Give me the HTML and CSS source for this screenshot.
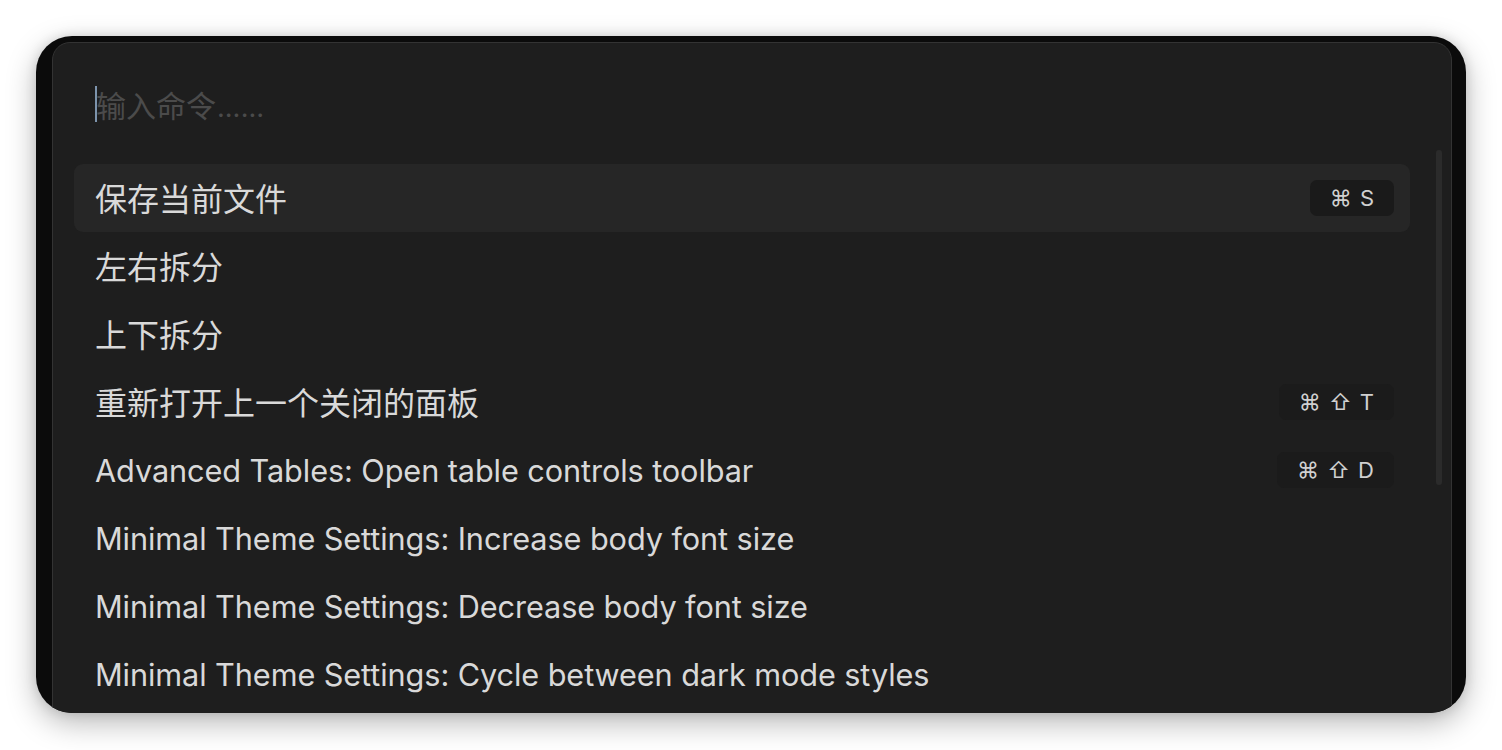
FILE: index.html
```html
<!DOCTYPE html>
<html lang="zh">
<head>
<meta charset="utf-8">
<title>Command palette</title>
<link rel="stylesheet" href="styles.css">
</head>
<body>
<div class="frame">
  <div class="panel">
    <div class="prompt">
      <span class="caret"></span><span class="placeholder">输入命令<span class="dots">……</span></span>
    </div>
    <div class="list">
      <div class="row selected"><span class="label cjk">保存当前文件</span><span class="kbd">⌘ S</span></div>
      <div class="row"><span class="label cjk">左右拆分</span></div>
      <div class="row"><span class="label cjk">上下拆分</span></div>
      <div class="row"><span class="label cjk">重新打开上一个关闭的面板</span><span class="kbd dim">⌘ ⇧ T</span></div>
      <div class="row"><span class="label">Advanced Tables: Open table controls toolbar</span><span class="kbd dim">⌘ ⇧ D</span></div>
      <div class="row"><span class="label">Minimal Theme Settings: Increase body font size</span></div>
      <div class="row"><span class="label">Minimal Theme Settings: Decrease body font size</span></div>
      <div class="row"><span class="label">Minimal Theme Settings: Cycle between dark mode styles</span></div>
    </div>
    <div class="scrollbar"></div>
  </div>
</div>
</body>
</html>
```

FILE: styles.css
```css
html, body {
  margin: 0;
  padding: 0;
  background: #ffffff;
}
body {
  width: 1502px;
  height: 750px;
  overflow: hidden;
  font-family: Inter, "Noto Sans CJK SC", sans-serif;
}
.frame {
  margin: 36px 0 0 36px;
  width: 1430px;
  height: 677px;
  box-sizing: border-box;
  padding: 6px 14px 0 16px;
  background: #0b0b0b;
  border-radius: 36px;
  overflow: hidden;
  box-shadow: 0 10px 30px rgba(0,0,0,0.28), 0 0 12px rgba(0,0,0,0.12);
}
.panel {
  position: relative;
  height: 720px;
  box-sizing: border-box;
  background: #1e1e1e;
  border: 1px solid #333333;
  border-radius: 18px;
  padding: 0 41px 0 21px;
}
.prompt {
  display: flex;
  align-items: center;
  height: 36px;
  margin: 43px 0 42px 21px;
}
.caret {
  width: 2px;
  height: 36px;
  background: #7d94ad;
}
.placeholder {
  font-family: "Noto Sans CJK SC", sans-serif;
  font-size: 30px;
  color: #4b4b4b;
  margin-left: -1px;
}
.dots {
  font-family: Inter, sans-serif;
  font-size: 27px;
  letter-spacing: 0.5px;
  margin-left: 1px;
}
.list {
  display: flex;
  flex-direction: column;
}
.row {
  display: flex;
  align-items: center;
  justify-content: space-between;
  height: 68px;
  padding: 0 16px 0 21px;
  border-radius: 9px;
  color: #d9d9d9;
}
.row.selected {
  background: #262626;
}
.label {
  font-size: 30.7px;
  letter-spacing: -0.1px;
}
.label.cjk {
  font-size: 32px;
  letter-spacing: 0;
  margin-bottom: 3px;
}
.kbd {
  font-size: 22px;
  color: #d0d0d0;
  background: #1a1a1a;
  border-radius: 7px;
  height: 36px;
  line-height: 36px;
  padding: 0 20px;
  word-spacing: 2px;
}
.kbd.dim {
  background: #1b1b1b;
}
.scrollbar {
  position: absolute;
  left: 1383px;
  top: 107px;
  width: 6px;
  height: 335px;
  border-radius: 3px;
  background: #2b2b2b;
}
```
